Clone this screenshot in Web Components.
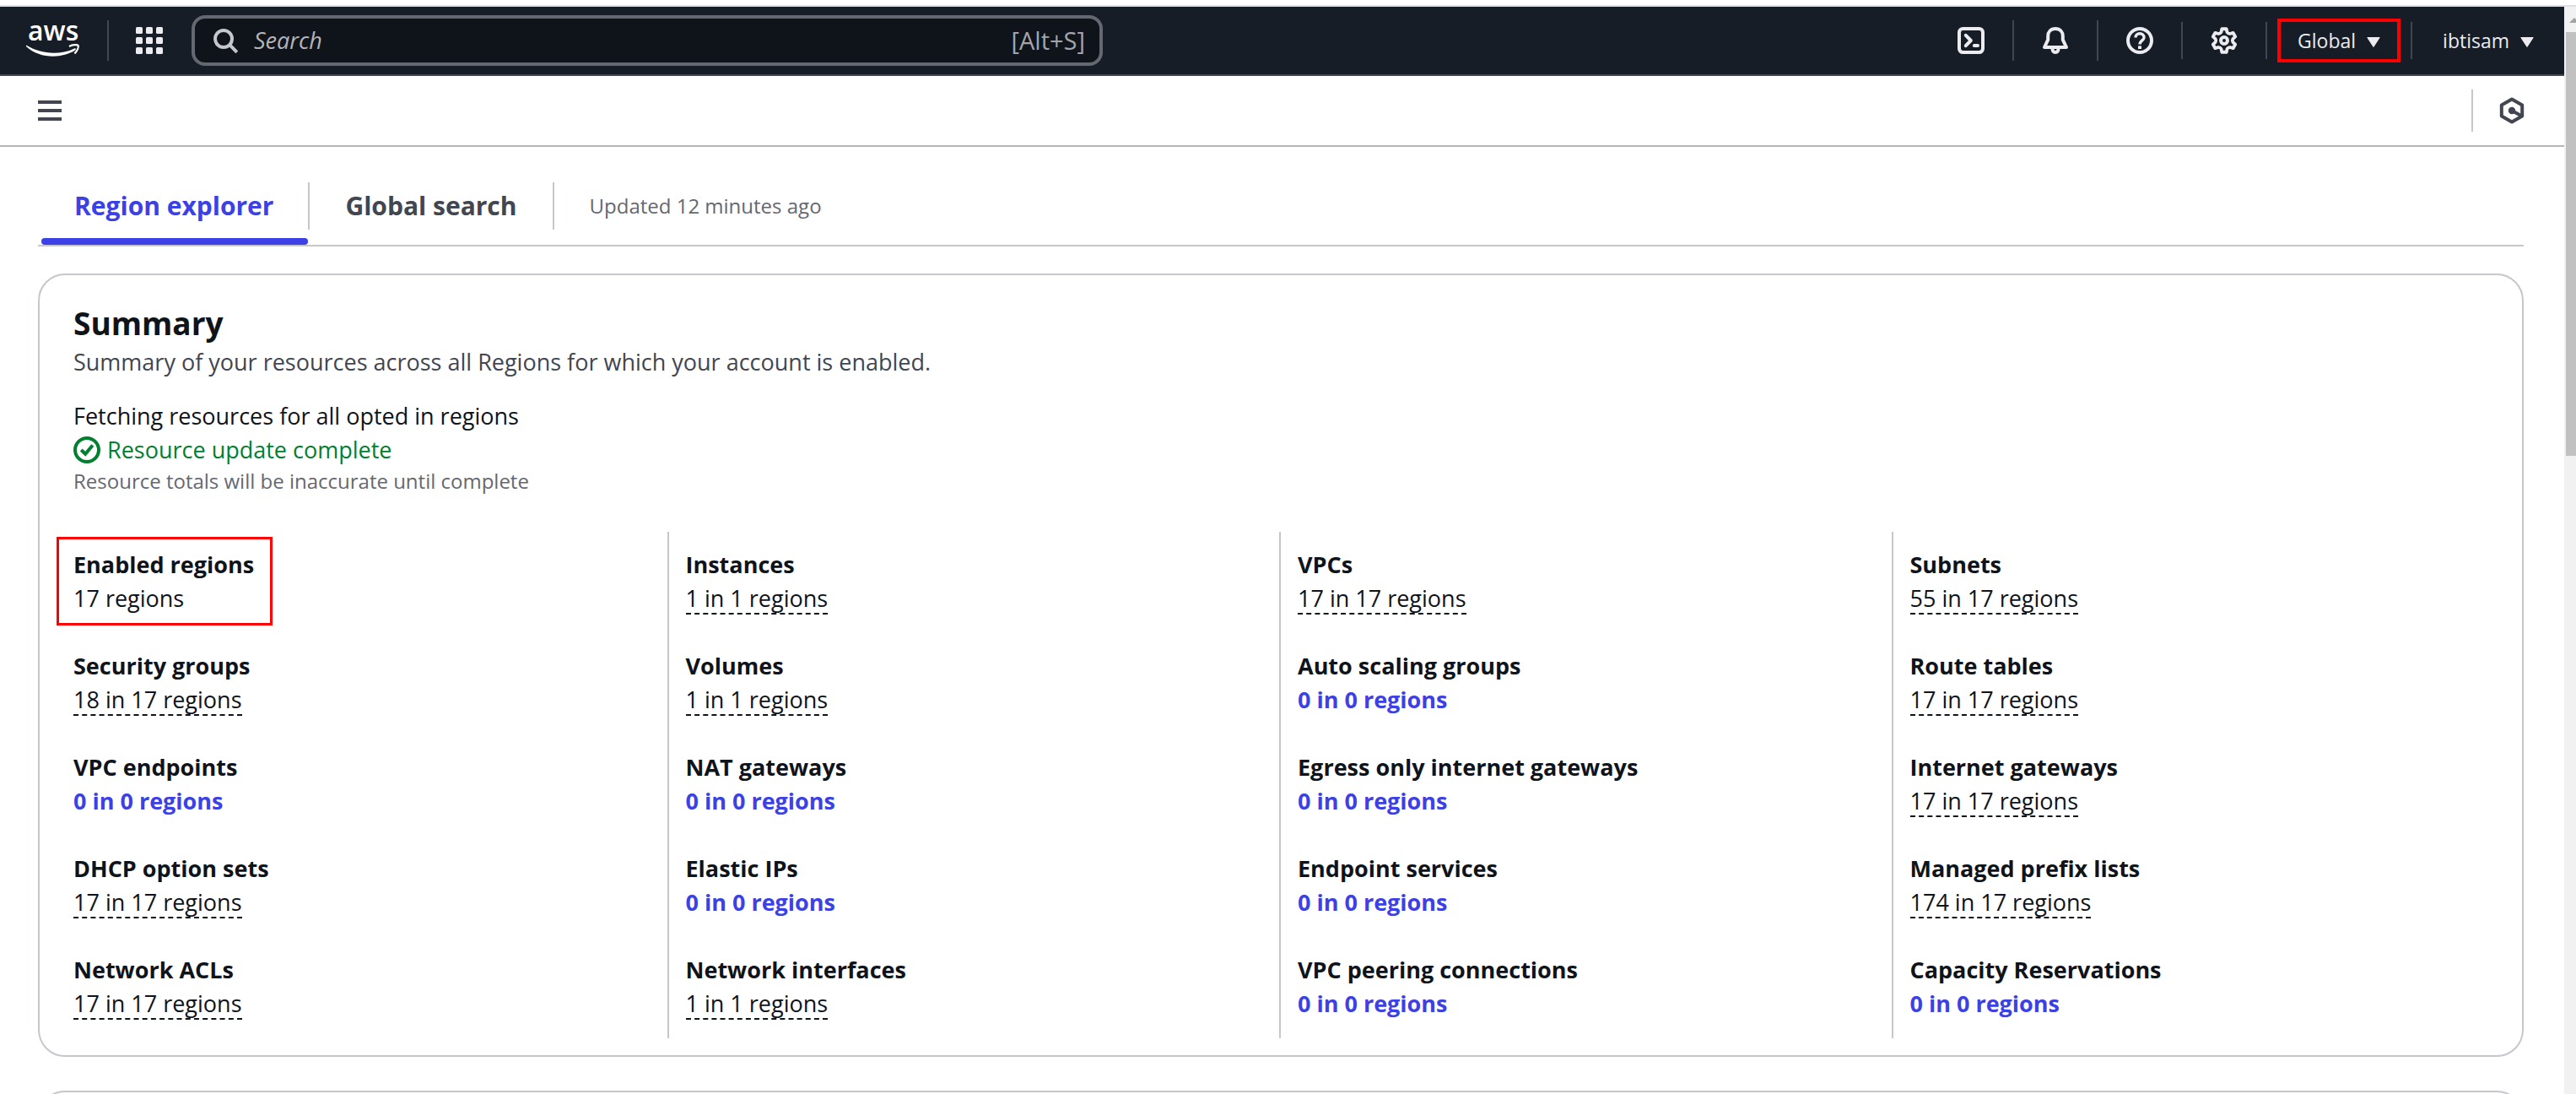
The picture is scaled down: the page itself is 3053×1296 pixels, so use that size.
<!DOCTYPE html>
<html lang="en">
<head>
<meta charset="utf-8">
<title>EC2 Global View</title>
<style>
  html, body { margin: 0; height: 100%; }
  body {
    overflow: hidden;
    background: #fff;
    color: #0f141a;
    font-family: "Open Sans", "Noto Sans", sans-serif;
    font-size: 27px;
    line-height: 40px;
  }
</style>
</head>
<body>
<console-app>
  <top-nav slot="nav"></top-nav>
  <tool-bar slot="toolbar"></tool-bar>
  <tab-bar updated="Updated 12 minutes ago"></tab-bar>
  <panel-card>
    <summary-header></summary-header>
    <stat-grid>
      <stat-item label="Enabled regions" kind="plain" marked>17 regions</stat-item>
      <stat-item label="Instances">1 in 1 regions</stat-item>
      <stat-item label="VPCs">17 in 17 regions</stat-item>
      <stat-item label="Subnets">55 in 17 regions</stat-item>
      <stat-item label="Security groups">18 in 17 regions</stat-item>
      <stat-item label="Volumes">1 in 1 regions</stat-item>
      <stat-item label="Auto scaling groups" kind="link">0 in 0 regions</stat-item>
      <stat-item label="Route tables">17 in 17 regions</stat-item>
      <stat-item label="VPC endpoints" kind="link">0 in 0 regions</stat-item>
      <stat-item label="NAT gateways" kind="link">0 in 0 regions</stat-item>
      <stat-item label="Egress only internet gateways" kind="link">0 in 0 regions</stat-item>
      <stat-item label="Internet gateways">17 in 17 regions</stat-item>
      <stat-item label="DHCP option sets">17 in 17 regions</stat-item>
      <stat-item label="Elastic IPs" kind="link">0 in 0 regions</stat-item>
      <stat-item label="Endpoint services" kind="link">0 in 0 regions</stat-item>
      <stat-item label="Managed prefix lists">174 in 17 regions</stat-item>
      <stat-item label="Network ACLs">17 in 17 regions</stat-item>
      <stat-item label="Network interfaces">1 in 1 regions</stat-item>
      <stat-item label="VPC peering connections" kind="link">0 in 0 regions</stat-item>
      <stat-item label="Capacity Reservations" kind="link">0 in 0 regions</stat-item>
    </stat-grid>
  </panel-card>
  <panel-card></panel-card>
</console-app>

<script>
const define = (name, markup, setup) =>
  customElements.define(name, class extends HTMLElement {
    constructor() {
      super();
      this.attachShadow({ mode: 'open' }).innerHTML = markup;
    }
    connectedCallback() { if (setup) setup(this, this.shadowRoot); }
  });

// Six-toothed cog on the 16-unit icon grid
const cog = () => {
  const pts = [];
  const at = (r, deg) => {
    const a = (deg - 90) * Math.PI / 180;
    return (8 + r * Math.cos(a)).toFixed(2) + ' ' + (8 + r * Math.sin(a)).toFixed(2);
  };
  for (let k = 0; k < 6; k++) {
    const t = k * 60;
    pts.push(at(5.3, t - 19), at(7, t - 11), at(7, t + 11), at(5.3, t + 19), at(4.9, t + 30));
  }
  return 'M' + pts.join('L') + 'Z';
};

const ICONS = {
  apps: '<g fill="currentColor" stroke="none">' +
    [0, 6, 12].map(y => [0, 6, 12].map(x => `<rect x="${x}" y="${y}" width="4" height="4" rx=".8"/>`).join('')).join('') + '</g>',
  search: '<circle cx="6" cy="7" r="5"/><path d="M9.6 10.6L13.9 14.9"/>',
  shell: '<rect x="1" y="1" width="14" height="14" rx="2.2"/><path d="M4.9 4.9L7.9 8L4.9 11.1M9.9 11H12" stroke-linecap="round" stroke-linejoin="round"/>',
  bell: '<path d="M8 1C5.2 1 3.6 3 3.6 5.4V7.6L1.5 12H14.5L12.4 7.6V5.4C12.4 3 10.8 1 8 1Z" stroke-linejoin="round"/><path d="M6.2 12.4C6.2 14.2 7 15 8 15S9.8 14.2 9.8 12.4"/>',
  help: '<circle cx="8" cy="8" r="7"/><path d="M5.5 6.3C5.5 4.8 6.6 3.9 8 3.9S10.5 4.8 10.5 6.2C10.5 8 8 7.9 8 10.3" stroke-width="1.7"/><path d="M8 11.2V13"/>',
  cog: `<path d="${cog()}" stroke-linejoin="round" stroke-width="1.9"/><circle cx="8" cy="8" r="2"/>`,
  caret: '<path d="M.8 4.5H15.2L8 15.5Z" fill="currentColor" stroke-width="1" stroke-linejoin="round"/>',
  menu: '<path d="M1 3H15M1 8H15M1 13H15"/>',
  hexagon: '<path d="M8 1.2L14.1 4.7V11.3L8 14.8L1.9 11.3V4.7Z" stroke-linejoin="round"/><circle cx="8" cy="8" r="2.1" fill="currentColor" stroke="none"/><path d="M8 8L13.4 11"/>',
  check: '<circle cx="8" cy="8" r="7"/><path d="M4.6 8L7.1 10.4L11.4 5.2"/>'
};

define('ui-icon', `
  <style>
    :host { display: block; width: 32px; height: 32px; flex: none; }
    :host([size="small"]) { width: 16px; height: 16px; }
    svg { display: block; width: 100%; height: 100%; overflow: visible; }
  </style>
  <svg viewBox="0 0 16 16" fill="none" stroke="currentColor" stroke-width="2" aria-hidden="true"></svg>`,
  (el, root) => { root.querySelector('svg').innerHTML = ICONS[el.getAttribute('name')] || ''; });

define('console-app', `
  <style>
    :host { display: flex; flex-direction: column; height: 100vh; overflow: hidden; }
    .edge { height: 6px; flex: none; border-bottom: 2px solid #dedee5; }
    .view { display: flex; flex: 1; min-height: 0; }
    .page { flex: 1; min-width: 0; overflow: hidden; }
    main { display: flex; flex-direction: column; gap: 40px; padding: 42px 48px 0 45px; }
    ::slotted(tab-bar) { margin-bottom: -8px; }
  </style>
  <div class="edge"></div>
  <div class="view">
    <div class="page">
      <slot name="nav"></slot>
      <slot name="toolbar"></slot>
      <main><slot></slot></main>
    </div>
    <scroll-rail></scroll-rail>
  </div>`);

define('scroll-rail', `
  <style>
    :host { display: block; width: 14px; flex: none; background: #f1f1f1; overflow: hidden; }
    .up { width: 12px; height: 6px; margin: 13px 0 11px 6px; background: #a3a3a3; clip-path: polygon(50% 0, 100% 100%, 0 100%); }
    .thumb { height: 39%; margin-left: 2px; background: #c1c1c1; }
  </style>
  <div class="up"></div>
  <div class="thumb"></div>`);

define('top-nav', `
  <style>
    :host { display: block; background: #161d26; border-bottom: 2px solid #424650; color: #ebebf0; }
    nav { display: flex; align-items: center; height: 80px; font-size: 23px; line-height: 32px; }
    button, a { display: flex; align-items: center; justify-content: center; border: 0; padding: 0; background: none; color: inherit; font: inherit; }
    .logo { padding: 0 32px 0 31px; color: #fff; }
    .logo svg { display: block; width: 64px; height: 80px; }
    .sep { width: 2px; height: 48px; background: #424650; flex: none; }
    .sep.short { height: 44px; }
    .apps { padding: 0 34px 0 32px; }
    .search { box-sizing: border-box; display: flex; align-items: center; flex: 0 1 1080px; height: 60px; padding: 0 17px 0 22px; border: 4px solid #656871; border-radius: 16px; background: #0f141a; color: #c6c6cd; }
    input { flex: 1; min-width: 0; margin: 0 0 0 16px; padding: 0; border: 0; outline: 0; background: none; color: #b4b4bb; font: inherit; font-size: 27px; line-height: 40px; }
    input::placeholder { color: #b4b4bb; opacity: 1; font-style: italic; }
    .hint { color: #a4a4ad; font-size: 29px; line-height: 38px; }
    .tools { display: flex; align-items: center; margin-left: auto; }
    .tool { width: 98px; height: 48px; }
    .menu { gap: 13px; padding: 0 36px; height: 48px; position: relative; }
    .marked::after { content: ""; position: absolute; inset: -2px 12px; border: 4px solid #f00; }
  </style>
  <nav aria-label="Global">
    <a class="logo" href="#" aria-label="AWS home">
      <svg viewBox="31 8 64 80" aria-hidden="true">
        <text x="33" y="48" font-family="Open Sans" font-weight="600" font-size="32" fill="#fff">aws</text>
        <path d="M31 53.6C48 64 70 66 88 57.4C90 56.6 90.6 58.3 89 59.6C73 70 46 69.5 30.8 54.8Z" fill="#fff"/>
        <path d="M82 54.9C86 53 91.5 52.6 92.7 53.9C93.6 55.4 91.6 60.4 88.4 63.4" fill="none" stroke="#fff" stroke-width="2.2"/>
      </svg>
    </a>
    <span class="sep"></span>
    <button class="apps" type="button" aria-label="Services"><ui-icon name="apps"></ui-icon></button>
    <div class="search">
      <ui-icon name="search"></ui-icon>
      <input type="text" placeholder="Search" aria-label="Search">
      <span class="hint">[Alt+S]</span>
    </div>
    <div class="tools">
      <button class="tool" type="button" aria-label="CloudShell"><ui-icon name="shell"></ui-icon></button>
      <span class="sep"></span>
      <button class="tool" type="button" aria-label="Notifications"><ui-icon name="bell"></ui-icon></button>
      <span class="sep"></span>
      <button class="tool" type="button" aria-label="Support"><ui-icon name="help"></ui-icon></button>
      <span class="sep short"></span>
      <button class="tool" type="button" aria-label="Settings"><ui-icon name="cog"></ui-icon></button>
      <span class="sep short"></span>
      <button class="menu marked" type="button">Global<ui-icon name="caret" size="small"></ui-icon></button>
      <span class="sep short"></span>
      <button class="menu" type="button">ibtisam<ui-icon name="caret" size="small"></ui-icon></button>
    </div>
  </nav>`);

define('tool-bar', `
  <style>
    :host { display: flex; align-items: center; justify-content: space-between; height: 82px; padding: 0 46px 0 43px; border-bottom: 2px solid #b4b4bb; color: #424650; }
    button { display: block; padding: 0; border: 0; background: none; color: inherit; }
    .end { display: flex; align-items: center; padding-left: 30px; height: 50px; border-left: 2px solid #c6c6cd; }
  </style>
  <button type="button" aria-label="Open navigation"><ui-icon name="menu"></ui-icon></button>
  <div class="end"><button type="button" aria-label="Assistant"><ui-icon name="hexagon"></ui-icon></button></div>`);

define('tab-bar', `
  <style>
    :host { display: flex; align-items: flex-start; padding-left: 4px; border-bottom: 2px solid #c6c6cd; }
    div { display: flex; }
    button { display: flex; flex-direction: column; gap: 10px; padding: 0; border: 0; background: none; color: #424650; font: inherit; font-size: 30px; font-weight: 700; }
    .text { box-sizing: border-box; height: 56px; padding: 0 42px; line-height: 56px; border-right: 2px solid #c6c6cd; }
    .bar { align-self: stretch; height: 8px; margin-right: 2px; border-radius: 4px; }
    button[aria-selected="true"] { color: #3c41e6; }
    button[aria-selected="true"] .text { padding: 0 41px 0 39px; }
    button[aria-selected="true"] .bar { background: #3c41e6; }
    .updated { padding-left: 42px; color: #656871; font-size: 24px; line-height: 56px; }
  </style>
  <div role="tablist">
    <button type="button" role="tab" aria-selected="true"><span class="text">Region explorer</span><span class="bar"></span></button>
    <button type="button" role="tab" aria-selected="false"><span class="text">Global search</span><span class="bar"></span></button>
  </div>
  <span class="updated"></span>`,
  (el, root) => { root.querySelector('.updated').textContent = el.getAttribute('updated'); });

define('panel-card', `
  <style>
    :host { display: block; box-sizing: border-box; min-height: 120px; flex: none; padding: 34px 20px 20px; border: 2px solid #c6c6cd; border-radius: 32px; }
  </style>
  <slot></slot>`);

define('summary-header', `
  <style>
    :host { display: flex; flex-direction: column; padding: 0 20px 43px; }
    h2, p { margin: 0; }
    h2 { margin-bottom: 3px; font-size: 37px; line-height: 46px; }
    .about { margin-bottom: 24px; color: #424650; }
    .status { display: flex; align-items: center; gap: 8px; color: #00802f; }
    .note { color: #656871; font-size: 24px; line-height: 34px; }
  </style>
  <h2>Summary</h2>
  <p class="about">Summary of your resources across all Regions for which your account is enabled.</p>
  <p>Fetching resources for all opted in regions</p>
  <p class="status"><ui-icon name="check"></ui-icon><span>Resource update complete</span></p>
  <p class="note">Resource totals will be inaccurate until complete</p>`);

define('stat-grid', `
  <style>
    :host { display: grid; grid-template-columns: repeat(4, minmax(0, 1fr)); }
    ::slotted(stat-item) { border-right: 2px solid #c6c6cd; }
    ::slotted(stat-item:nth-child(4n)) { border-right-color: transparent; }
  </style>
  <slot></slot>`);

define('stat-item', `
  <style>
    :host { display: block; box-sizing: border-box; padding: 19px 18px 21px 20px; }
    dl { position: relative; width: fit-content; margin: 0; }
    dt { font-weight: 700; }
    dd { display: flex; align-items: flex-start; margin: 0; height: 40px; }
    button { box-sizing: border-box; height: 39px; padding: 0; border: 0; border-bottom: 2px dashed #0f141a; background: none; color: inherit; font: inherit; }
    a { color: #3c41e6; font-weight: 700; text-decoration: none; }
    :host([marked]) dl::after { content: ""; position: absolute; inset: -13px -22px -12px -20px; border: 3px solid #f00; }
  </style>
  <dl><dt></dt><dd></dd></dl>`,
  (el, root) => {
    root.querySelector('dt').textContent = el.getAttribute('label');
    const tag = { plain: 'span', link: 'a' }[el.getAttribute('kind')] || 'button';
    const value = document.createElement(tag);
    if (tag === 'a') value.href = '#';
    if (tag === 'button') value.type = 'button';
    value.append(document.createElement('slot'));
    root.querySelector('dd').append(value);
  });
</script>
</body>
</html>
